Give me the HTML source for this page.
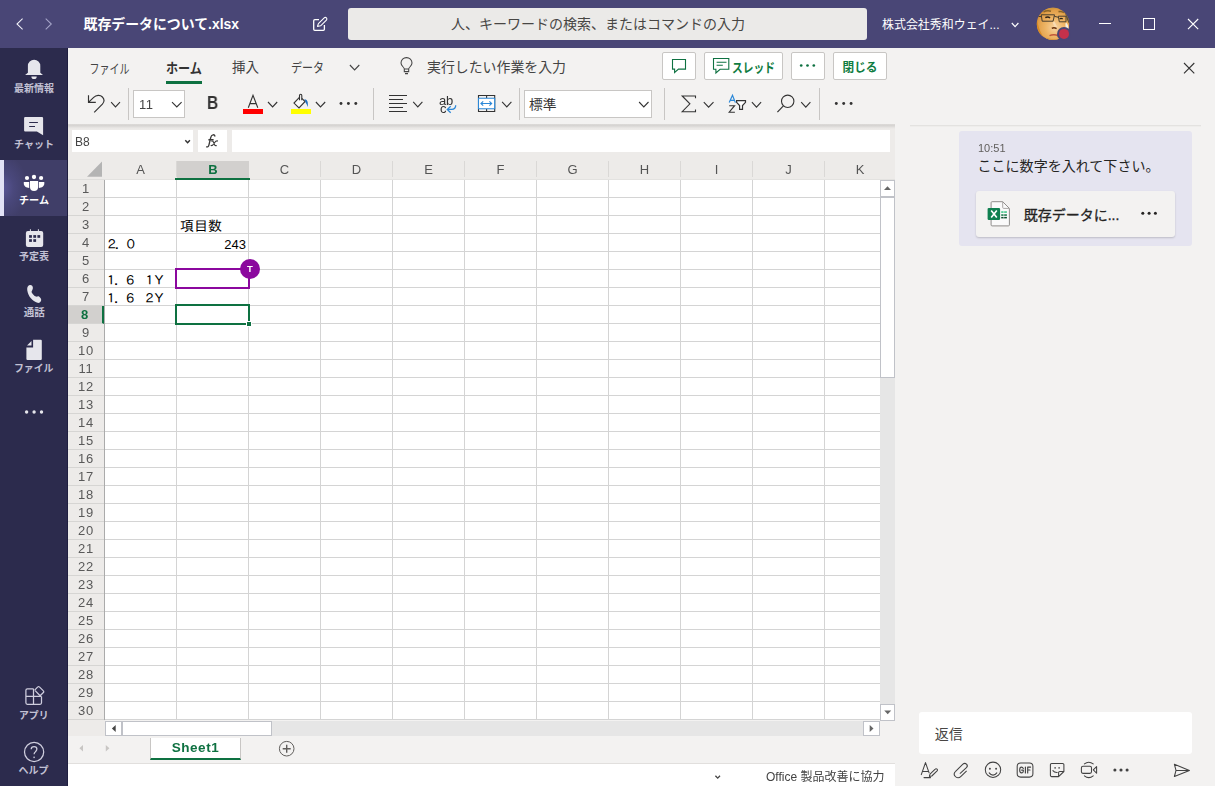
<!DOCTYPE html>
<html lang="ja">
<head>
<meta charset="utf-8">
<title>既存データについて.xlsx | Microsoft Teams</title>
<style>
html,body{margin:0;padding:0}
body{width:1215px;height:786px;position:relative;overflow:hidden;background:#f3f2f1;
  font-family:"Liberation Sans",sans-serif;color:#333}
body *{box-sizing:border-box}
.abs,.jt,.ic{position:absolute;display:block}
.jt,.ic{overflow:visible;pointer-events:none}
.jt text{font-family:"Liberation Sans","Noto Sans CJK JP",sans-serif}
.jt.cell text{font-family:"Liberation Sans","IPAGothic","Noto Sans CJK JP",sans-serif}

/* ---------- title bar ---------- */
.titlebar{position:absolute;left:0;top:0;width:1215px;height:48px;background:#494676}
.searchbox{position:absolute;left:348px;top:8px;width:519px;height:32px;background:#ebeae8;border-radius:3px}
.avatar{position:absolute;left:1037px;top:8px;width:32px;height:32px;border-radius:50%;overflow:hidden;
  background:#d9973f}
.presence{position:absolute;left:1056px;top:27px;width:15px;height:15px;border-radius:50%;
  background:#c4314b;border:2px solid #494676}

/* ---------- left rail ---------- */
.rail{position:absolute;left:0;top:48px;width:68px;height:738px;background:#2c2b4d;border-right:1px solid #1f1e40}
.rail .active{position:absolute;left:0;top:112px;width:67px;height:56px;
  background:radial-gradient(ellipse 26px 34px at 2px 50%,#5b5799 0,#4a487c 45%,#403e68 100%)}
.rail .active:before{content:"";position:absolute;left:0;top:0;width:4px;height:56px;background:#e2e2f6}

/* ---------- excel ---------- */
.excel{position:absolute;left:68px;top:48px;width:827px;height:738px;background:#f3f2f1}
.ribbon-shadow{position:absolute;left:68px;top:124px;width:827px;height:5px;
  background:linear-gradient(#e0dedc 0,#d4d2d0 22%,#dddbd9 50%,#e7e5e3 75%,#edebe9)}
.formula-area{position:absolute;left:68px;top:124px;width:827px;height:56px;background:#edebe9}
.btn{position:absolute;top:52px;height:28px;background:#fff;border:1px solid #c8c6c4;border-radius:2px}
.tabline{position:absolute;left:166px;top:81px;width:36px;height:3px;background:#0e7141}
.sep{position:absolute;top:88px;width:1px;height:32px;background:#c8c6c4}
.box{position:absolute;top:90px;height:28px;background:#fff;border:1px solid #c8c6c4}
.wbox{position:absolute;top:130px;height:22px;background:#fff}
.txt{position:absolute;white-space:nowrap;line-height:1}
.txt,.rh,.ch,.sheettab,.tmark{will-change:transform}

.grid{position:absolute;left:105px;top:180px;width:775px;height:540px;background-color:#fff;
  background-image:
   linear-gradient(90deg,transparent 71px,#d4d4d4 71px),
   linear-gradient(transparent 17px,#d4d4d4 17px);
  background-size:72px 18px,72px 18px}
.rowhdr{position:absolute;left:68px;top:179px;width:37px;height:557px;background:#edebe9;border-top:1px solid #dfdedc}
.rowhdr:after{content:"";position:absolute;left:36px;top:0;width:1px;height:540px;background:#ababab}
.hdrline{position:absolute;left:105px;top:179px;width:790px;height:1px;background:#e3e2e0}
.rh{position:absolute;left:68px;width:36px;height:18px;font-size:13px;line-height:17px;text-align:center;color:#595959;letter-spacing:.7px;
  border-bottom:1px solid #d6d5d3}
.rh.sel{background:#d2d0ce;color:#0e7141;font-weight:bold;border-right:2px solid #0e7141}
.ch{position:absolute;top:161px;height:19px;font-size:13px;line-height:18px;text-align:center;color:#555}
.ch:after{content:"";position:absolute;right:-1px;top:0;width:1px;height:16px;background:#dad8d6}
.ch.sel{background:#d2d0ce;color:#0e7141;font-weight:bold;left:177px!important;width:72px!important}
.ch.last:after{display:none}
.ch.sel:after{right:auto;left:-2px;top:17px;width:75px;height:2px;background:#0e7141}

.vscroll{position:absolute;left:880px;top:180px;width:15px;height:541px;background:#e6e6e6}
.hscroll{position:absolute;left:105px;top:721px;width:775px;height:15px;background:#e6e6e6}
.sbtn{position:absolute;background:#fff;border:1px solid #c0c2c8}
.sheetbar{position:absolute;left:68px;top:736px;width:827px;height:28px;background:#f3f2f1;border-bottom:1px solid #e1dfdd}
.sheettab{position:absolute;left:150px;top:738px;width:91px;height:22px;background:#fff;border-left:1px solid #c8c6c4;
  border-right:1px solid #c8c6c4;border-bottom:2px solid #0e7141;color:#0e7141;font-weight:bold;font-size:13.500px;letter-spacing:.55px;
  text-align:center;line-height:20px}
.statusbar{position:absolute;left:68px;top:764px;width:827px;height:22px;background:#fff}

/* ---------- right panel ---------- */
.panel{position:absolute;left:895px;top:48px;width:320px;height:738px;background:#f3f2f1}
.divider{position:absolute;left:910px;top:125px;width:291px;height:2px;background:linear-gradient(#e3e2e0 50%,#eeedeb 50%)}
.bubble{position:absolute;left:959px;top:131px;width:233px;height:115px;background:#e5e4f0;border-radius:3px}
.card{position:absolute;left:976px;top:191px;width:199px;height:46px;background:#f3f2f1;border-radius:3px;
  box-shadow:0 1px 2px rgba(0,0,0,.18)}
.replybox{position:absolute;left:919px;top:712px;width:273px;height:42px;background:#fff;border-radius:3px}
</style>
</head>
<body>

<header class="titlebar">
  <div class="searchbox"></div>
  <svg class="jt" role="img" aria-label="既存データについて.xlsx" style="left:82px;top:16px" width="158" height="16" viewBox="82 16 158 16"><text x="83.500" y="29" font-size="14" font-weight="bold" fill="#fff" textLength="155.500" lengthAdjust="spacingAndGlyphs">既存データについて.xlsx</text></svg>
  <svg class="jt" role="img" aria-label="人、キーワードの検索、またはコマンドの入力" style="left:450px;top:16px" width="296" height="16" viewBox="450 16 296 16"><text x="451" y="29" font-size="14" fill="#484644" textLength="294" lengthAdjust="spacingAndGlyphs">人、キーワードの検索、またはコマンドの入力</text></svg>
  <svg class="jt" role="img" aria-label="株式会社秀和ウェイ..." style="left:881px;top:18px" width="120" height="14" viewBox="881 18 120 14"><text x="882" y="29.300" font-size="12" fill="#fff" textLength="117.500" lengthAdjust="spacingAndGlyphs">株式会社秀和ウェイ...</text></svg>
<svg class="ic" style="left:0;top:0" width="1215" height="48" viewBox="0 0 1215 48" fill="none">
    <path d="M22.600 18.700 17 24l5.600 5.300" stroke="#f0f0f8" stroke-width="1.050"/>
    <path d="M45.700 18.700 51.300 24l-5.600 5.300" stroke="#a5a4c8" stroke-width="1.050"/>
    <path d="M319 19.6h-4.2a1.1 1.1 0 0 0-1.1 1.1v8.5a1.1 1.1 0 0 0 1.1 1.1h8.5a1.1 1.1 0 0 0 1.1-1.1V25" stroke="#fff" stroke-width="1.3"/>
    <path d="M317.5 26.5l.9-2.9 5.8-5.700a1.550 1.550 0 0 1 2.200 2.200l-5.800 5.700z" stroke="#fff" stroke-width="1.1" stroke-linejoin="round"/>
    <path d="M1011.8 23l3.300 3.600 3.300-3.600" stroke="#fff" stroke-width="1.200"/>
    <path d="M1099 23.500h12" stroke="#fff" stroke-width="1"/>
    <rect x="1143.500" y="18.500" width="11" height="11" stroke="#fff" stroke-width="1"/>
    <path d="M1188 19l10.200 10.200M1198.200 19 1188 29.200" stroke="#fff" stroke-width="1.100"/>
  </svg>
  <svg class="ic" style="left:1036px;top:7px" width="34" height="34" viewBox="1036 7 34 34">
    <defs>
      <clipPath id="avc"><circle cx="1053" cy="23.900" r="16.200"/></clipPath>
      <radialGradient id="avg" cx="0.56" cy="0.6" r="0.62">
        <stop offset="0" stop-color="#f7d3a2"/><stop offset="0.45" stop-color="#eeb566"/><stop offset="0.8" stop-color="#e2a04a"/><stop offset="1" stop-color="#d48a2a"/>
      </radialGradient>
      <filter id="avb" x="-10%" y="-10%" width="120%" height="120%"><feGaussianBlur stdDeviation="0.55"/></filter>
      <filter id="avb2" x="-10%" y="-10%" width="120%" height="120%"><feGaussianBlur stdDeviation="0.3"/></filter>
    </defs>
    <g clip-path="url(#avc)">
      <rect x="1036" y="7" width="34" height="34" fill="url(#avg)"/>
      <g filter="url(#avb)">
        <path d="M1036 7h34v4.500c-4-2-9-2.800-15-2.600-6 .2-12 1.800-19 5.600z" fill="#cf963f"/>
        <path d="M1036 14c1.500 8 2.500 16 8 24l-8 3z" fill="#d98a24"/>
        <path d="M1043.500 11.800q3.500-1.600 7.500-.6M1058.500 11.600q3-.6 5.500 1" stroke="#8a6528" stroke-width="1.600" fill="none"/>
        <path d="M1062.500 9.500c3.500 1.800 6 5 7.500 9v6c-1.800-1.500-2.800-4-3.500-7-1-3.500-2.200-6-4-8z" fill="#5e5238"/>
        <path d="M1065.800 22.500c1.700.8 3 4 3.200 8.500l-2.600-1.500c-1-2.400-1.300-5-.6-7z" fill="#f4f1e4"/>
        <path d="M1053.500 22c1.200 2 1.800 4 2.600 5.500" stroke="#f9dcb4" stroke-width="2.200" fill="none"/>
        <path d="M1051.800 28.300q2.300-1.300 4.800.3" stroke="#6b3410" stroke-width="1.500" fill="none"/>
        <path d="M1049.500 35.600q4.500-1.600 9 .2" stroke="#c0583c" stroke-width="1.500" fill="none"/>
        <path d="M1046 38.500q7 2.500 14 .5" stroke="#d9953f" stroke-width="1.500" fill="none"/>
      </g>
      <g filter="url(#avb2)">
        <path d="M1037.800 16.400l3.400.2M1041.200 14.800h13.300l-1.400 6.400h-10.900zM1054.400 16.300l3.900 1M1058.300 16.200h7.700v5.600h-6.700z" stroke="#3f382c" stroke-width=".95" fill="none"/>
        <path d="M1045.300 17.700q2.300-1.500 4.800.1M1059.600 18.800q1.500-.9 3.100.1" stroke="#2e2318" stroke-width="1.400" fill="none"/>
      </g>
    </g>
    <circle cx="1064" cy="33.900" r="7" fill="#494676"/>
    <circle cx="1064" cy="33.900" r="5" fill="#c4314b"/>
  </svg>
</header>

<nav aria-label="アプリ バー">
  <div class="rail"><div class="active"></div></div>
  <svg class="ic" style="left:0;top:48px" width="68" height="738" viewBox="0 48 68 738">
    <g fill="#e6e6ec">
      <path d="M27.900 72.700V66a6.200 6.200 0 0 1 12.400 0v6.700l2.700 2.400H25.100z"/>
      <path d="M31.400 76.400h5.300a2.650 2.650 0 0 1-5.300 0z"/>
      <path d="M25.200 116.900h16.800a1.100 1.100 0 0 1 1.100 1.100v17.200l-6.200-3.700H25.200a1.100 1.100 0 0 1-1.100-1.100V118a1.100 1.100 0 0 1 1.100-1.100z"/>
      <path d="M27.900 230.900h13.300a2 2 0 0 1 2 2v12.200a2 2 0 0 1-2 2H27.900a2 2 0 0 1-2-2v-12.200a2 2 0 0 1 2-2z"/>
      <path d="M29.900 229.300h1v2h-1zM37.900 229.300h1v2h-1z"/>
      <path d="M29.700 285c1.800-.4 3.200 1 3.200 3 0 2-1.700 3.300-1.300 4.200.8 1.800 2.600 3.600 4.400 4.400 1 .4 1.800-.8 3-.1 1.500 1 2.800 3 2 4.500-.8 1.600-2.200 2.200-3.500 1.800-5-1.500-9.200-6.300-10.200-12.300-.4-2.500.2-5 2.400-5.500z"/>
      <path d="M33.100 339.800h7.700a1 1 0 0 1 1 1V359a1 1 0 0 1-1 1H27.400a1 1 0 0 1-1-1v-11.600h6.700z"/>
      <path d="M27 345.500l4.500-4.500v4.500z"/>
      <circle cx="26.600" cy="412" r="1.700"/><circle cx="34.100" cy="412" r="1.700"/><circle cx="41.500" cy="412" r="1.700"/>
    </g>
    <path d="M29.200 122.500h8.700M29.200 126.500h5.800" stroke="#2c2b4d" stroke-width="1.100"/>
    <g fill="#2c2b4d">
      <rect x="29.100" y="235.100" width="2.800" height="2.700"/><rect x="33.300" y="235.100" width="2.800" height="2.700"/><rect x="37.400" y="235.100" width="2.800" height="2.700"/>
      <rect x="29.100" y="239.200" width="2.800" height="2.700"/><rect x="33.300" y="239.200" width="2.800" height="2.700"/>
    </g>
    <g fill="#fff">
      <circle cx="34" cy="177" r="2.150"/><circle cx="27" cy="178" r="2.100"/><circle cx="41.100" cy="178" r="2.100"/>
      <path d="M30 181h8.100v6a4.050 4.050 0 0 1-8.100 0z"/>
      <path d="M23.800 181.900h5.400v6.100c-3 0-5.400-1.700-5.400-4.400z"/>
      <path d="M44.300 181.900h-5.400v6.100c3 0 5.400-1.700 5.400-4.400z"/>
    </g>
    <g fill="none" stroke="#cfcede" stroke-width="1.250">
      <path d="M33.500 688.800v15.500M25.900 696.300h15.600M33.500 688.800h-6.100a1.500 1.500 0 0 0-1.500 1.500v12.500a1.500 1.500 0 0 0 1.500 1.500H40a1.500 1.500 0 0 0 1.500-1.500v-6.200"/>
      <path d="M37.800 686.900a1.100 1.100 0 0 1 1.600 0l4 4a1.100 1.100 0 0 1 0 1.600l-3.300 3.300M34.700 690.100l3.100-3.200M34.700 690.100l5.400 5.700" />
      <circle cx="34.100" cy="752" r="9.600"/>
      <path d="M31.200 749.300c0-1.700 1.300-2.700 2.900-2.700s2.800 1 2.800 2.500c0 1.300-.8 2-1.600 2.800-.8.700-1.200 1.300-1.200 2.300"/>
    </g>
    <rect x="33.400" y="756.600" width="1.400" height="1.500" fill="#c9c8d9"/>
  </svg>
  <svg class="jt" role="img" aria-label="最新情報" style="left:13px;top:82px" width="43" height="13" viewBox="13 82 43 13"><text x="14" y="92" font-size="10" font-weight="bold" fill="#c2c1d4" textLength="40" lengthAdjust="spacingAndGlyphs">最新情報</text></svg><svg class="jt" role="img" aria-label="チャット" style="left:13px;top:138px" width="43" height="13" viewBox="13 138 43 13"><text x="14" y="148.300" font-size="10" font-weight="bold" fill="#c2c1d4" textLength="40" lengthAdjust="spacingAndGlyphs">チャット</text></svg><svg class="jt" role="img" aria-label="チーム" style="left:18px;top:195px" width="32" height="11" viewBox="18 195 32 11"><text x="19" y="204.300" font-size="10" font-weight="bold" fill="#fff" textLength="30" lengthAdjust="spacingAndGlyphs">チーム</text></svg><svg class="jt" role="img" aria-label="予定表" style="left:18px;top:250px" width="33" height="13" viewBox="18 250 33 13"><text x="19" y="260.300" font-size="10" font-weight="bold" fill="#c2c1d4" textLength="30" lengthAdjust="spacingAndGlyphs">予定表</text></svg><svg class="jt" role="img" aria-label="通話" style="left:22px;top:306px" width="24" height="13" viewBox="22 306 24 13"><text x="23.800" y="316.400" font-size="10" font-weight="bold" fill="#c2c1d4" textLength="21" lengthAdjust="spacingAndGlyphs">通話</text></svg><svg class="jt" role="img" aria-label="ファイル" style="left:13px;top:362px" width="42" height="12" viewBox="13 362 42 12"><text x="14" y="372" font-size="10" font-weight="bold" fill="#c2c1d4" textLength="39.500" lengthAdjust="spacingAndGlyphs">ファイル</text></svg><svg class="jt" role="img" aria-label="アプリ" style="left:18px;top:708px" width="32" height="13" viewBox="18 708 32 13"><text x="19" y="718.500" font-size="10" font-weight="bold" fill="#c2c1d4" textLength="29.500" lengthAdjust="spacingAndGlyphs">アプリ</text></svg><svg class="jt" role="img" aria-label="ヘルプ" style="left:17px;top:764px" width="33" height="12" viewBox="17 764 33 12"><text x="18.500" y="774.400" font-size="10" font-weight="bold" fill="#c2c1d4" textLength="30" lengthAdjust="spacingAndGlyphs">ヘルプ</text></svg>
</nav>

<main aria-label="Excel">
  <div class="excel"></div>
  <div class="formula-area"></div>
  <div class="ribbon-shadow"></div>
  <svg class="jt" role="img" aria-label="ファイル" style="left:89px;top:60px" width="41" height="15" viewBox="89 60 41 15"><text x="89.500" y="72.500" font-size="13" fill="#444" textLength="40" lengthAdjust="spacingAndGlyphs">ファイル</text></svg><svg class="jt" role="img" aria-label="ホーム" style="left:165px;top:59px" width="38" height="16" viewBox="165 59 38 16"><text x="166" y="72.500" font-size="14" font-weight="bold" fill="#333" textLength="36" lengthAdjust="spacingAndGlyphs">ホーム</text></svg><svg class="jt" role="img" aria-label="挿入" style="left:231px;top:60px" width="29" height="15" viewBox="231 60 29 15"><text x="232" y="72.300" font-size="13.500" fill="#444" textLength="27" lengthAdjust="spacingAndGlyphs">挿入</text></svg><svg class="jt" role="img" aria-label="データ" style="left:290px;top:59px" width="35" height="16" viewBox="290 59 35 16"><text x="291" y="72.200" font-size="13" fill="#444" textLength="33" lengthAdjust="spacingAndGlyphs">データ</text></svg><svg class="jt" role="img" aria-label="実行したい作業を入力" style="left:426px;top:58px" width="141" height="16" viewBox="426 58 141 16"><text x="427" y="71.500" font-size="14" fill="#444" textLength="139" lengthAdjust="spacingAndGlyphs">実行したい作業を入力</text></svg>
  <div class="tabline"></div>
  <div class="btn" style="left:662px;width:34px"></div>
  <div class="btn" style="left:704px;width:79px"></div>
  <div class="btn" style="left:791px;width:34px"></div>
  <div class="btn" style="left:833px;width:54px"></div>
  <svg class="jt" role="img" aria-label="スレッド" style="left:731px;top:58px" width="45" height="17" viewBox="731 58 45 17"><text x="732" y="72" font-size="13" font-weight="bold" fill="#107c41" textLength="43" lengthAdjust="spacingAndGlyphs">スレッド</text></svg><svg class="jt" role="img" aria-label="閉じる" style="left:841px;top:59px" width="38" height="15" viewBox="841 59 38 15"><text x="842.500" y="71.500" font-size="12" font-weight="bold" fill="#107c41" textLength="35" lengthAdjust="spacingAndGlyphs">閉じる</text></svg>
  <div class="sep" style="left:128px"></div>
  <div class="sep" style="left:373px"></div>
  <div class="sep" style="left:519px"></div>
  <div class="sep" style="left:664px"></div>
  <div class="sep" style="left:819px"></div>
  <div class="box" style="left:133px;width:52px"></div>
  <div class="txt" style="left:139px;top:98px;font-size:13px;color:#444;letter-spacing:.4px">11</div>
  <div class="txt" style="left:207px;top:94px;font-size:18px;font-weight:bold;color:#333;transform:scaleX(.86);transform-origin:0 0">B</div>
  <div class="box" style="left:524px;width:128px"></div>
  <svg class="jt" role="img" aria-label="標準" style="left:528px;top:97px" width="30" height="14" viewBox="528 97 30 14"><text x="529" y="108.600" font-size="13" fill="#333" textLength="27.500" lengthAdjust="spacingAndGlyphs">標準</text></svg>

  <div class="wbox" style="left:72px;width:121px"></div>
  <div class="txt" style="left:75px;top:136px;font-size:12px;color:#444">B8</div>
  <div class="wbox" style="left:198px;width:29px"></div>
  <div class="wbox" style="left:232px;width:658px"></div>

  <div class="txt" style="left:439.400px;top:93.600px;font-size:13px;color:#333;letter-spacing:-.35px">ab</div>
  <div class="txt" style="left:439.500px;top:101.800px;font-size:13px;color:#333">c</div>
  <div class="rowhdr"></div>
  <div class="hdrline"></div>
  <svg class="ic" style="left:68px;top:48px" width="827" height="132" viewBox="68 48 827 132" fill="none">
    <!-- tab row -->
    <path d="M349.9 65.0 354.6 69.9 359.3 65.0" stroke="#444" stroke-width="1.1"/>
    <path d="M404.300 69c0-1.900-3.300-2.900-3.300-5.900a5.500 5.500 0 0 1 11 0c0 3-3.300 4-3.300 5.900zM404.300 69v2.600h4.400V69M405 73.600h3" stroke="#444" stroke-width="1.050"/>
    <path d="M672.500 59.500h13v9.600h-7l-3.900 3.400v-3.400h-2.100z" stroke="#0e7141" stroke-width="1.100"/>
    <path d="M713.500 58.500h15.300v10.800h-8.700l-4.200 3.700v-3.700h-2.400zM716.600 62.300h9.900M716.600 65.300h6.200" stroke="#0e7141" stroke-width="1.100"/>
    <g fill="#0e7141"><circle cx="801.200" cy="65.500" r="1.350"/><circle cx="807.500" cy="65.500" r="1.350"/><circle cx="813.800" cy="65.500" r="1.350"/></g>
    <!-- toolbar row -->
    <path d="M88.500 95.200v7.200h7.300M88.700 102.200l5-4.800c2.400-2.400 6.400-2.800 8.700-.4 1.900 2 1.900 5 0 7.200l-8.200 8.200" stroke="#333" stroke-width="1.150"/>
    <path d="M111.1 102.1 115.5 106.9 120.0 102.1" stroke="#333" stroke-width="1.1"/>
    <path d="M172.0 102.1 176.8 106.9 181.600 102.1" stroke="#333" stroke-width="1.1"/>
    <path d="M248.300 107.800 253 95.300l4.800 12.500M249.900 103.600h6.300" stroke="#333" stroke-width="1.100"/>
    <rect x="243" y="109" width="20" height="5" fill="#f00"/>
    <path d="M268.0 102.0 272.6 106.9 277.200 102.0" stroke="#333" stroke-width="1.1"/>
    <path d="M299.400 97.400 294 103.100l5 4.900 6.100-6.500-3.300-3.100" stroke="#333" stroke-width="1.100" fill="#fafafa"/>
    <path d="M299.500 100.200v-4.800a1.150 1.150 0 0 1 2.300 0v4.900" stroke="#333" stroke-width="1.100"/>
    <path d="M304.200 99.300c1.900-.1 3.100 1 3.500 2.900.3 1.700.2 3.300-.1 4.700-.5-1.800-1.200-3.400-2.200-4.600.1-1.100-.4-2.100-1.200-3z" fill="#1e6fc0"/>
    <rect x="291" y="109" width="20" height="5" fill="#ff0"/>
    <path d="M315.900 102.0 320.500 106.9 325.200 102.0" stroke="#333" stroke-width="1.1"/>
    <g fill="#333"><circle cx="341" cy="103.500" r="1.450"/><circle cx="348.400" cy="103.500" r="1.450"/><circle cx="355.800" cy="103.500" r="1.450"/></g>
    <path d="M389 95.500h18M389 99.500h14M389 103.500h18M389 107.500h14M389 111.500h18" stroke="#333" stroke-width="1.050"/>
    <path d="M413.200 101.9 417.800 106.9 422.400 101.9" stroke="#333" stroke-width="1.1"/>
    <path d="M455.700 105.300c0 2.600-1.500 4.100-4.100 4.100h-4.200M450.700 106.200l-3.400 3.200 3.400 3.300" stroke="#2b88d8" stroke-width="1.300"/>
    <path d="M478.500 95.500h16.200v16h-16.200zM486.600 95.500v2.600M486.600 108.900v2.600" stroke="#333" stroke-width="1.100"/>
    <path d="M478.500 98.200h16.200v10.600h-16.200z" stroke="#2b88d8" stroke-width="1.100" fill="#fff"/>
    <path d="M481 103.500h10.600M483.200 101.300l-2.300 2.200 2.300 2.200M489.400 101.300l2.300 2.200-2.300 2.200" stroke="#2b88d8" stroke-width="1.100"/>
    <path d="M502.1 101.9 506.800 106.9 511.400 101.9" stroke="#333" stroke-width="1.1"/>
    <path d="M639.1 102.0 643.800 106.9 648.500 102.0" stroke="#333" stroke-width="1.1"/>
    <path d="M695.500 98.200v-2.200h-13.300l7.700 7.800-7.700 7.900h13.300v-2.200" stroke="#333" stroke-width="1.100"/>
    <path d="M703.800 102.1 708.600 107.200 713.500 102.1" stroke="#333" stroke-width="1.1"/>
    <path d="M736.600 100.700h8.900v1.600l-3 3.300v3.700h-2.900v-3.700l-3-3.300z" stroke="#333" stroke-width="1.200" fill="#fff"/>
    <path d="M729.200 102.600l3.300-7.300 2.900 7.300M730.300 100.300h4.300" stroke="#2b88d8" stroke-width="1.200"/>
    <path d="M729.200 105.700h5.400l-5.400 6.500h5.700" stroke="#333" stroke-width="1.100"/>
    <path d="M751.9 102.1 756.500 107.200 761.1 102.1" stroke="#333" stroke-width="1.1"/>
    <circle cx="787.700" cy="101.300" r="6.200" stroke="#333" stroke-width="1.100"/>
    <path d="M783.400 105.900l-6 6.300" stroke="#333" stroke-width="1.200"/>
    <path d="M801.200 102.1 805.800 107.200 810.400 102.1" stroke="#333" stroke-width="1.1"/>
    <g fill="#333"><circle cx="836.300" cy="103.500" r="1.450"/><circle cx="843.700" cy="103.500" r="1.450"/><circle cx="851.100" cy="103.500" r="1.450"/></g>
    <!-- formula bar -->
    <path d="M185.300 140.300l2.300 2.400 2.300-2.400" stroke="#333" stroke-width="1.500"/>
    <path d="M215.100 136.500c-.3-1.200-1.100-1.800-2.100-1.700-1.200.1-1.900 1-2.300 2.800l-1.800 7.600c-.4 1.600-1.300 2.100-2.700 1.400M208.400 139.700h5.200" stroke="#3b3a39" stroke-width="1.350"/>
    <path d="M211.300 141.200c1.300-.5 2 .1 2.400 1.400l.7 1.800c.4 1.200 1.100 1.600 2.300 1M217.900 141.100c-1.300-.5-2.300.1-3.200 1.400l-1.300 1.800c-.8 1.200-1.600 1.600-2.700 1" stroke="#3b3a39" stroke-width="1.150"/>
    <!-- select-all corner -->
    <path d="M102 161.500v15.200H87z" fill="#b4b4b4"/>
  </svg>
  <div class="ch" style="left:105px;width:71px">A</div><div class="ch sel" style="left:177px;width:71px">B</div><div class="ch" style="left:249px;width:71px">C</div><div class="ch" style="left:321px;width:71px">D</div><div class="ch" style="left:393px;width:71px">E</div><div class="ch" style="left:465px;width:71px">F</div><div class="ch" style="left:537px;width:71px">G</div><div class="ch" style="left:609px;width:71px">H</div><div class="ch" style="left:681px;width:71px">I</div><div class="ch" style="left:753px;width:71px">J</div><div class="ch last" style="left:825px;width:70px">K</div>
  <div class="rh" style="top:180px">1</div><div class="rh" style="top:198px">2</div><div class="rh" style="top:216px">3</div><div class="rh" style="top:234px">4</div><div class="rh" style="top:252px">5</div><div class="rh" style="top:270px">6</div><div class="rh" style="top:288px">7</div><div class="rh sel" style="top:306px">8</div><div class="rh" style="top:324px">9</div><div class="rh" style="top:342px">10</div><div class="rh" style="top:360px">11</div><div class="rh" style="top:378px">12</div><div class="rh" style="top:396px">13</div><div class="rh" style="top:414px">14</div><div class="rh" style="top:432px">15</div><div class="rh" style="top:450px">16</div><div class="rh" style="top:468px">17</div><div class="rh" style="top:486px">18</div><div class="rh" style="top:504px">19</div><div class="rh" style="top:522px">20</div><div class="rh" style="top:540px">21</div><div class="rh" style="top:558px">22</div><div class="rh" style="top:576px">23</div><div class="rh" style="top:594px">24</div><div class="rh" style="top:612px">25</div><div class="rh" style="top:630px">26</div><div class="rh" style="top:648px">27</div><div class="rh" style="top:666px">28</div><div class="rh" style="top:684px">29</div><div class="rh" style="top:702px">30</div>
  <div class="grid"></div>
  <svg class="jt cell" role="img" aria-label="項目数" style="left:179px;top:218px" width="45" height="15" viewBox="179 218 45 15"><text x="180" y="230.500" font-size="14" fill="#000">項目数</text></svg><svg class="jt cell" role="img" aria-label="２．０" style="left:106px;top:237px" width="31" height="13" viewBox="106 237 31 13"><text x="105.200" y="248.800" font-size="13" letter-spacing="-3.500" fill="#000">２．０</text></svg><svg class="jt cell" role="img" aria-label="243" style="left:223px;top:238px" width="24" height="12" viewBox="223 238 24 12"><text x="224.200" y="248.600" font-size="13" fill="#000">243</text></svg><svg class="jt cell" role="img" aria-label="１．６　１Ｙ" style="left:107px;top:274px" width="59" height="12" viewBox="107 274 59 12"><text x="104.500" y="284.600" font-size="13" letter-spacing="-3.400" fill="#000">１．６　１Ｙ</text></svg><svg class="jt cell" role="img" aria-label="１．６　２Ｙ" style="left:107px;top:292px" width="59" height="12" viewBox="107 292 59 12"><text x="104.500" y="302.900" font-size="13" letter-spacing="-3.400" fill="#000">１．６　２Ｙ</text></svg>
  <div class="abs" style="left:175px;top:268px;width:75px;height:21px;border:2px solid #8b089e"></div>
  <div class="abs tmark" style="left:240px;top:259px;width:20px;height:20px;border-radius:50%;background:#8b089e;color:#fff;
     font-size:9.500px;font-weight:bold;text-align:center;line-height:20px">T</div>
  <div class="abs" style="left:175px;top:304px;width:75px;height:21px;border:2px solid #0e7141"></div>
  <div class="abs" style="left:246px;top:321px;width:6px;height:6px;background:#0e7141;border:1px solid #fff;box-sizing:content-box;width:4px;height:4px"></div>

  <div class="vscroll"></div>
  <div class="hscroll"></div>
  <div class="sbtn" style="left:880px;top:180px;width:15px;height:17px"></div>
  <div class="sbtn" style="left:880px;top:197px;width:15px;height:181px"></div>
  <div class="sbtn" style="left:880px;top:704px;width:15px;height:17px"></div>
  <div class="sbtn" style="left:105px;top:721px;width:17px;height:15px"></div>
  <div class="sbtn" style="left:122px;top:721px;width:150px;height:15px"></div>
  <div class="sbtn" style="left:863px;top:721px;width:17px;height:15px"></div>

  <div class="sheetbar"></div>
  <div class="sheettab">Sheet1</div>
  <div class="statusbar"></div>
  <svg class="ic" style="left:68px;top:180px" width="827" height="606" viewBox="68 180 827 606" fill="none">
    <path d="M884 190h7l-3.500-3.800z" fill="#666"/>
    <path d="M884.200 710.500h7l-3.500 3.800z" fill="#666"/>
    <path d="M115.700 725v7l-3.800-3.500z" fill="#444"/>
    <path d="M869.700 725v7l3.800-3.500z" fill="#666"/>
    <path d="M83 745v6.500l-3.600-3.250zM105.800 745v6.500l3.600-3.250z" fill="#c8c6c4"/>
    <circle cx="286.700" cy="748.700" r="7.300" stroke="#605e5c" stroke-width="1"/>
    <path d="M282.700 748.700h8M286.700 744.700v8" stroke="#605e5c" stroke-width="1.400"/>
    <path d="M715.400 775.700l2.300 2.400 2.300-2.400" stroke="#444" stroke-width="1.300"/>
  </svg>
  <svg class="jt" role="img" aria-label="Office 製品改善に協力" style="left:765px;top:770px" width="121" height="13" viewBox="765 770 121 13"><text x="766" y="780.900" font-size="12" fill="#444" textLength="118.500" lengthAdjust="spacingAndGlyphs">Office 製品改善に協力</text></svg>
</main>

<aside aria-label="会話">
  <div class="panel"></div>
  <div class="divider"></div>
  <div class="bubble"></div>
  <div class="txt" style="left:977.700px;top:142.500px;font-size:11px;color:#605e5c">10:51</div>
  <svg class="jt" role="img" aria-label="ここに数字を入れて下さい。" style="left:977px;top:158px" width="176" height="16" viewBox="977 158 176 16"><text x="977.500" y="171.300" font-size="14" fill="#252423" textLength="182" lengthAdjust="spacingAndGlyphs">ここに数字を入れて下さい。</text></svg>
  <div class="card"></div>
  <svg class="jt" role="img" aria-label="既存データに..." style="left:1023px;top:206px" width="97" height="16" viewBox="1023 206 97 16"><text x="1023.800" y="219.500" font-size="14" fill="#252423" stroke="#252423" stroke-width=".3" textLength="95.500" lengthAdjust="spacingAndGlyphs">既存データに...</text></svg>
  <div class="replybox"></div>
  <svg class="jt" role="img" aria-label="返信" style="left:934px;top:725px" width="30" height="17" viewBox="934 725 30 17"><text x="934.800" y="738.800" font-size="14" fill="#484644">返信</text></svg>
  <svg class="ic" style="left:895px;top:48px" width="320" height="738" viewBox="895 48 320 738" fill="none">
    <path d="M1184 63l10.300 10.300M1194.300 63 1184 73.300" stroke="#333" stroke-width="1.100"/>
    <!-- excel file icon -->
    <path d="M992.100 201.700h10.600l6.700 6.700v16.500a1 1 0 0 1-1 1h-16.300a1 1 0 0 1-1-1v-22.200a1 1 0 0 1 1-1z" fill="#fafafa" stroke="#8f8d8b" stroke-width="1"/>
    <path d="M1002.700 201.700v5.700a1 1 0 0 0 1 1h5.700" stroke="#a9a7a5" stroke-width="1"/>
    <rect x="987.600" y="207.900" width="12.500" height="12.100" rx="1.200" fill="#0f8050"/>
    <path d="M991.200 210.600l5.600 7M996.800 210.600l-5.600 7" stroke="#fff" stroke-width="1.600"/>
    <path d="M1001.200 211.300h5.700v1.500h-5.700z" fill="#33c481"/>
    <path d="M1001.200 214.300h5.700v1.500h-5.700z" fill="#0e7141"/>
    <path d="M1001.200 216.900h5.700v1.500h-5.700z" fill="#094d2c"/>
    <path d="M1003.800 211v7.600" stroke="#fafafa" stroke-width=".6"/>
    <g fill="#252423"><circle cx="1142.800" cy="213.200" r="1.500"/><circle cx="1149.100" cy="213.200" r="1.500"/><circle cx="1155.400" cy="213.200" r="1.500"/></g>
    <!-- compose toolbar -->
    <g stroke="#424242" stroke-width="1.050" stroke-linejoin="round" stroke-linecap="round">
      <path d="M921.300 774.600l4.200-12 3.600 10.200M922.500 771.500h5.600M924 777.600h6.500"/>
      <path d="M929.400 776.500l.6-2.400 5.200-5a1.300 1.300 0 0 1 1.900 1.800l-5.300 5.100z" stroke-linejoin="round"/>
      <path d="M966.400 771.200l-5.700 5.500c-1.600 1.500-4 1.400-5.400-.2-1.400-1.500-1.200-3.800.3-5.200l7.300-7.200c1.100-1 2.700-1 3.600 0 1 1 .9 2.600-.1 3.600l-6.200 5.600"/>
      <circle cx="993" cy="769.800" r="7.700"/>
      <path d="M989.200 772.900c1 1.500 2.300 2.200 3.800 2.200s2.800-.7 3.800-2.200"/>
      <path d="M1020.700 762.900h8.700c2 0 3.500 1.500 3.500 3.300v7.600c0 1.800-1.500 3.300-3.500 3.300h-8.700c-2 0-3.500-1.500-3.500-3.300v-7.600c0-1.800 1.500-3.300 3.500-3.300z"/>
      <path d="M1063.900 771.500v-6.700a1.300 1.300 0 0 0-1.300-1.300h-10.900a1.300 1.300 0 0 0-1.300 1.300v10.500a1.300 1.300 0 0 0 1.300 1.300h6.900zM1063.900 771.500h-4.200a1.100 1.100 0 0 0-1.100 1.100v4"/>
      <path d="M1052.900 770.600c1 1.400 2.500 2 4.300 1.900"/>
      <rect x="1081.400" y="766.300" width="10.100" height="7.100" rx="1.600"/>
      <path d="M1093.300 769.850l3.300-3.300v6.700z" stroke-linejoin="round"/>
      <path d="M1084.400 763.900c2.800-2.200 6-2.200 8.800 0M1084.400 775.900c2.800 2.200 6 2.200 8.800 0"/>
      <path d="M1023.300 768.400c-.4-.8-1-1.300-1.800-1.300-1.200 0-1.800 1-1.800 2.900s.6 2.900 1.800 2.900c1 0 1.700-.6 1.800-1.700v-1.100h-1.700M1025.400 767.100v5.800M1027.700 772.900v-5.800h2.900M1027.700 770h2.300" stroke-width="1.150"/>
      <path d="M1174.400 764.300l15 6.100-15 6.100 1.600-6.100zM1176 770.400h13.400" stroke-linejoin="round"/>
    </g>
    <g fill="#424242">
      <circle cx="989.900" cy="768.700" r=".95"/><circle cx="996.100" cy="768.700" r=".95"/>
      <circle cx="1055.100" cy="767.900" r=".8"/><circle cx="1059.100" cy="767.900" r=".8"/>
      <circle cx="1114.900" cy="770" r="1.550"/><circle cx="1121" cy="770" r="1.550"/><circle cx="1127.100" cy="770" r="1.550"/>
    </g>
  </svg>
</aside>

</body>
</html>
